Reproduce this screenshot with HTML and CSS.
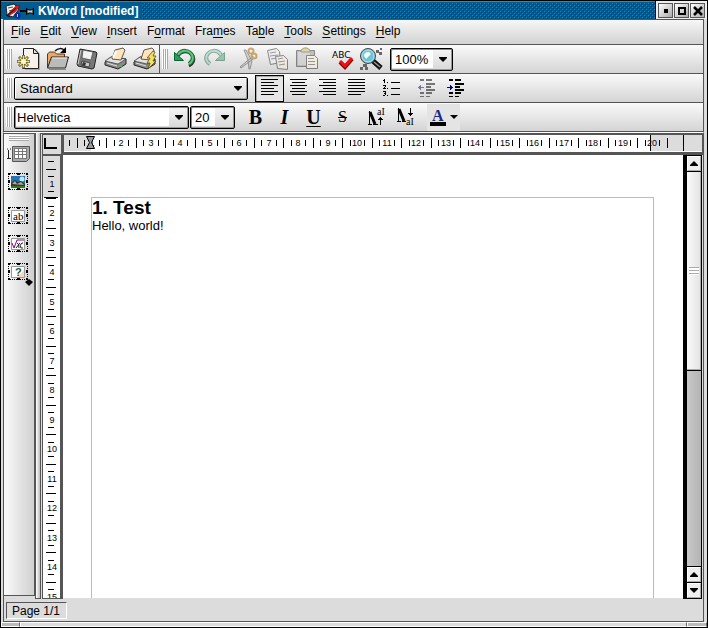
FILE: index.html
```html
<!DOCTYPE html>
<html lang="en">
<head>
<meta charset="utf-8">
<title>KWord [modified]</title>
<link rel="stylesheet" href="styles.css">
</head>
<body>
<div class="window">
  <header class="titlebar">
    <div class="caption">
      <svg class="app-icon" width="16" height="16" viewBox="0 0 16 16"><path d="M1 3l8-2 5 5-6 8-6-2z" fill="#eee" stroke="#222"/><path d="M3 5l5-1M4 8l3-1" stroke="#555"/><path d="M2 12L12 2l3 1-5 6-7 4z" fill="#e01818" stroke="#700" stroke-width=".6"/><path d="M1 12l4 2M2 13l9-8" stroke="#111"/><circle cx="12.500" cy="12.500" r="3" fill="#0828a8"/><path d="M12.500 11v3" stroke="#9cf"/></svg>
      <svg class="pin-icon" width="15" height="12" viewBox="0 0 15 12"><path d="M0 6h6" stroke="#000" stroke-width="2"/><path d="M6.500 3v7M13.500 3v7" stroke="#000"/><path d="M7 4l2 1h2l2-1v5l-2-1H9L7 9z" fill="#ccc" stroke="#000"/></svg>
      <h1>KWord [modified]</h1>
      <div class="stipple"></div>
    </div>
    <div class="window-buttons">
      <button aria-label="Minimize"><svg width="10" height="10"><path d="M3 3h4v4H3z"/></svg></button>
      <button aria-label="Maximize"><svg width="10" height="10"><path d="M2 2h6v6H2z" fill="none" stroke="#000" stroke-width="2"/></svg></button>
      <button aria-label="Close"><svg width="10" height="10"><path d="M1 1l8 8M9 1L1 9" stroke="#000" stroke-width="2.500"/></svg></button>
    </div>
  </header>

  <nav class="menubar">
    <button><u>F</u>ile</button><button><u>E</u>dit</button><button><u>V</u>iew</button><button><u>I</u>nsert</button><button>F<u>o</u>rmat</button><button>Fra<u>m</u>es</button><button>Ta<u>b</u>le</button><button><u>T</u>ools</button><button><u>S</u>ettings</button><button><u>H</u>elp</button>
  </nav>

  <div class="toolbar">
    <span class="grip"></span>
    <button class="tool" aria-label="New"><svg width="24" height="24" viewBox="0 0 24 24"><path d="M8 2h11l4 5v16H8z" fill="#aaa"/><path d="M6.500 1.500h10l5 5v15h-15z" fill="#f8f0ea" stroke="#222"/><path d="M16.500 1.500v5h5z" fill="#ddd" stroke="#222"/><path d="M6.500 8v14M0 14.500h13M2 10l9 9M11 10l-9 9" stroke="#333" stroke-width="2.500"/><path d="M6.500 8.500v12M.5 14.500h12M2.500 10.500l8 8M10.500 10.500l-8 8" stroke="#fce94a" stroke-width="1.500"/><circle cx="6.500" cy="14.500" r="2.500" fill="#fffbb0"/></svg></button>
    <button class="tool" aria-label="Open"><svg width="24" height="24" viewBox="0 0 24 24"><path d="M1.500 20V7l2-2h5l2 2h8v13z" fill="#e8a868" stroke="#5a3a20"/><path d="M1.500 21l4-11h17l-3 11z" fill="#b9bcb9" stroke="#222"/><path d="M6 11h15" stroke="#f2f2f2"/><path d="M3 22.500h17" stroke="#888"/><path d="M9 4c3-3 7-3 9-1" fill="none" stroke="#111" stroke-width="1.500"/><path d="M20 0v6h-6z"/></svg></button>
    <button class="tool" aria-label="Save"><svg width="24" height="24" viewBox="0 0 24 24"><path d="M5 2l16 3 1 1-3 15-2 1-14-3-1-2z" fill="#777" stroke="#222"/><path d="M8 3l10 2-2 8-9-2z" fill="#f2f2f2" stroke="#444" stroke-width=".7"/><path d="M7 14l8 2-1 4-8-2z" fill="#ccc" stroke="#222" stroke-width=".7"/><path d="M8 15l3 1-1 3-3-1z" fill="#333"/><path d="M6 3L3 17" stroke="#ccc"/></svg></button>
    <button class="tool" aria-label="Print"><svg width="24" height="24" viewBox="0 0 24 24"><path d="M1 15l6-5 15 2v5l-8 5-13-4z" fill="#888" stroke="#222"/><path d="M1 14l6-4 15 2-8 5z" fill="#e2e2e2" stroke="#333" stroke-width=".7"/><path d="M8 12l3-9 8-2 2 2-4 10z" fill="#ffe4bc" stroke="#333" stroke-width=".8"/><path d="M12 4l-3 7" stroke="#fff" stroke-width="2"/><path d="M3 16l10 3" stroke="#ddd"/><path d="M15 19h3" stroke="#3c3" stroke-width="2"/></svg></button>
    <button class="tool" aria-label="Print preview"><svg width="24" height="24" viewBox="0 0 24 24"><path d="M1 15l6-5 15 2v5l-8 5-13-4z" fill="#888" stroke="#222"/><path d="M1 14l6-4 15 2-8 5z" fill="#e2e2e2" stroke="#333" stroke-width=".7"/><path d="M8 12l3-9 8-2 2 2-4 10z" fill="#ffe4bc" stroke="#333" stroke-width=".8"/><path d="M3 16l10 3" stroke="#ddd"/><path d="M20 4l-6 7h3l-3 5h3l-2 6 8-8h-3l3-5h-3l2-4z" fill="#f0df69" stroke="#554b10" stroke-width=".8"/></svg></button>
    <span class="divider"></span>
    <span class="grip"></span>
    <button class="tool" aria-label="Undo"><svg width="24" height="24" viewBox="0 0 24 24"><path d="M5 9c4-6 12-5 15 0 2 4 0 8-4 10" fill="none" stroke="#222" stroke-width="3"/><path d="M5 8c4-6 11-5 14 0 2 4 0 7-3 9" fill="none" stroke="#173" stroke-width="4"/><path d="M5 8c4-6 11-5 14 0 2 4 0 7-3 9" fill="none" stroke="#6fbe88" stroke-width="2"/><path d="M1.500 5.500v8h9z" fill="#39965a" stroke="#063"/></svg></button>
    <button class="tool faded" aria-label="Redo"><svg width="24" height="24" viewBox="0 0 24 24"><g transform="matrix(-1 0 0 1 24 0)"><path d="M5 8c4-6 11-5 14 0 2 4 0 7-3 9" fill="none" stroke="#375" stroke-width="4"/><path d="M5 8c4-6 11-5 14 0 2 4 0 7-3 9" fill="none" stroke="#9cb" stroke-width="2"/><path d="M1.500 5.500v8h9z" fill="#5a7" stroke="#264"/></g></svg></button>
    <span class="space"></span>
    <button class="tool faded" aria-label="Cut"><svg width="24" height="24" viewBox="0 0 24 24"><path d="M7 3l4 10 1 9h1l2-8L9 3zM16 9L3 20l1 1 12-9z" fill="#bbb" stroke="#333" stroke-width=".8"/><circle cx="14" cy="4" r="2.500" fill="none" stroke="#a76a10" stroke-width="2"/><circle cx="17" cy="9" r="2.500" fill="none" stroke="#a76a10" stroke-width="2"/></svg></button>
    <button class="tool faded" aria-label="Copy"><svg width="24" height="24" viewBox="0 0 24 24"><path d="M1.500 3.500l9-2 3 3 1 11-10 2z" fill="#eee" stroke="#333"/><path d="M4 6l6-1M4 9l8-1M5 12l6-1" stroke="#555"/><path d="M9.500 9.500l8-1 4 4v10l-10-1z" fill="#f8ecdf" stroke="#333"/><path d="M12 12l5-1M12 15l7-1M13 18l6-1" stroke="#555"/></svg></button>
    <button class="tool faded" aria-label="Paste"><svg width="24" height="24" viewBox="0 0 24 24"><path d="M1.500 3.500h18v16h-18z" fill="#999" stroke="#333"/><path d="M3 5h12v13H3z" fill="#c5c5c5"/><path d="M6 5V3l3-2h3l3 2v2z" fill="#d6bd55" stroke="#554"/><path d="M11.500 8.500h8l3 3v10h-11z" fill="#fff1de" stroke="#333"/><path d="M13 11.500h6M13 14.500h7M13 17.500h7" stroke="#555"/></svg></button>
    <span class="space"></span>
    <button class="tool" aria-label="Spelling"><svg width="24" height="24" viewBox="0 0 24 24"><text x="2" y="11" class="abc">ABC</text><path d="M10 15l5 5 7-8" fill="none" stroke="#800" stroke-width="4"/><path d="M10 14l5 5 7-8" fill="none" stroke="#e11" stroke-width="3"/></svg></button>
    <button class="tool" aria-label="Find"><svg width="24" height="24" viewBox="0 0 24 24"><path d="M17 3h3v3h-3zM21 1h2v2h-2zM20 5h3v3h-3zM1 20h3v3H1zM4 17h4v3H4zM6 20h3v3H6z" fill="#666"/><path d="M14 14l8 7" stroke="#111" stroke-width="5"/><path d="M15 15l6 5" stroke="#999" stroke-width="1.500"/><circle cx="9" cy="9" r="7.500" fill="#72c0d4" stroke="#444"/><circle cx="9" cy="9" r="6" fill="none" stroke="#b8e4e8"/><path d="M5 9c0-3 2-4 5-4l2 2-5 5z" fill="#e9ffff"/></svg></button>
    <select class="combo combo-zoom" aria-label="Zoom"><option>100%</option></select>
  </div>

  <div class="toolbar">
    <span class="grip"></span>
    <select class="combo combo-style" aria-label="Style"><option>Standard</option></select>
    <button class="tool line pressed" aria-label="Align left"><svg width="18" height="18" viewBox="0 0 18 18"><path d="M0 .5h17M0 3.500h13M0 6.500h17M0 9.500h13M0 12.500h17M0 15.500h13" /></svg></button>
    <button class="tool line" aria-label="Align center"><svg width="18" height="18" viewBox="0 0 18 18"><path d="M0 .5h17M2 3.500h13M0 6.500h17M2 9.500h13M0 12.500h17M2 15.500h13"/></svg></button>
    <button class="tool line" aria-label="Align right"><svg width="18" height="18" viewBox="0 0 18 18"><path d="M0 .5h17M4 3.500h13M0 6.500h17M4 9.500h13M0 12.500h17M4 15.500h13"/></svg></button>
    <button class="tool line" aria-label="Justify"><svg width="18" height="18" viewBox="0 0 18 18"><path d="M0 .5h17M0 3.500h17M0 6.500h17M0 9.500h17M0 12.500h17M0 15.500h13"/></svg></button>
    <span class="space"></span>
    <button class="tool line" aria-label="Numbered list"><svg width="18" height="18" viewBox="0 0 18 18"><path d="M8 3.500h9M8 9.500h9M8 15.500h9"/><path d="M0 1.500h2M1.500 0v4M4 3.500h1M0 6.500h2M2.500 6v2M1.500 8v1M0 9.500h3M4 9.500h1M0 12.500h2M1 14.500h1M2.500 12v4M0 16.500h2M4 16.500h1"/></svg></button>
    <span class="space"></span>
    <button class="tool line dim" aria-label="Decrease indent"><svg width="18" height="18" viewBox="0 0 18 18"><path d="M2 1h4M8 1h6M8 5h9M8 8h5M8 11h9M2 14h4M8 14h6" stroke-width="2"/><path d="M2 17.500h4M8 17.500h4"/><path class="arrow" d="M0 8.500h6M1.500 7v3M2.500 6v5"/></svg></button>
    <button class="tool line" aria-label="Increase indent"><svg width="18" height="18" viewBox="0 0 18 18"><path d="M2 1h4M8 1h6M8 5h9M8 8h5M8 11h9M2 14h4M8 14h6" stroke-width="2"/><path d="M2 17.500h4M8 17.500h4"/><path class="arrow" d="M0 8.500h6M4.500 7v3M3.500 6v5"/></svg></button>
  </div>

  <div class="toolbar">
    <span class="grip"></span>
    <select class="combo combo-font" aria-label="Font"><option>Helvetica</option></select>
    <select class="combo combo-size" aria-label="Font size"><option>20</option></select>
    <span class="space"></span>
    <button class="tool letter"><b>B</b></button>
    <button class="tool letter"><i>I</i></button>
    <button class="tool letter"><u>U</u></button>
    <button class="tool letter strike"><s>S</s></button>
    <span class="space"></span>
    <button class="tool line" aria-label="Superscript"><svg width="22" height="22" viewBox="0 0 22 22"><path d="M3 6l5 12" stroke-width="3"/><path d="M2.500 5v13M1 18.500h4M6 18.500h5"/><path d="M13.500 19v-8M11 13.500h5M12 12.500h3"/><text x="10" y="9" class="script">aI</text></svg></button>
    <button class="tool line" aria-label="Subscript"><svg width="22" height="22" viewBox="0 0 22 22"><path d="M3 3l5 12" stroke-width="3"/><path d="M2.500 2v13M1 15.500h4M6 15.500h4"/><path d="M14.500 2v8M12 7.500h5M13 8.500h3"/><text x="10" y="19" class="script">aI</text></svg></button>
    <span class="space"></span>
    <button class="tool line text-color" aria-label="Text color"><svg width="28" height="20" viewBox="0 0 28 20"><text x="2" y="14" class="color-a">A</text><path d="M0 17h16" stroke-width="4"/><path class="fill" d="M20 8h8l-4 4z"/></svg></button>
  </div>

  <main class="workspace">
    <aside class="sidebar">
      <span class="grip grip-h"></span>
      <button class="side-tool" aria-label="Insert table"><svg width="28" height="20" viewBox="0 0 28 20"><path d="M3 5h1M6 5h1M4.500 6v8M3 14.500h4" stroke="#222"/><path d="M8.500 2.500h17v12l-3 3h-14z" fill="#aaa" stroke="#555"/><path d="M10 4h13v11H10z" fill="#fff"/><path d="M10 4.500h13M10 7.500h13M10 10.500h13M10 14.500h13M10.500 4v11M14.500 4v11M18.500 4v11M22.500 4v11" stroke="#777"/></svg></button>
      <button class="side-tool" aria-label="Insert picture"><svg width="28" height="20" viewBox="0 0 28 20"><path class="frame" d="M4 1.500h20M4 17.500h20M4.500 2v16M23.500 2v16"/><path class="marks" d="M4 1h2v2H4zM13 1h3v2h-3zM22 1h2v2h-2zM4 8h2v3H4zM22 8h2v3h-2zM4 16h2v2H4zM13 16h3v2h-3zM22 16h2v2h-2z"/><path d="M7 4h14v12H7z" fill="#2572b5"/><circle cx="18" cy="7" r="2.500" fill="#bde9ff"/><path d="M7 11l4-3 3 2 3-1 4 3v2H7z" fill="#333"/><path d="M8 12l3-3 2 3 4-2 3 3z" fill="#aaa"/><path d="M7 14h14v2H7z" fill="#327a18"/></svg></button>
      <button class="side-tool gap-above" aria-label="Text frame"><svg width="28" height="20" viewBox="0 0 28 20"><path class="frame" d="M4 1.500h20M4 17.500h20M4.500 2v16M23.500 2v16"/><path class="marks" d="M4 1h2v2H4zM13 1h3v2h-3zM22 1h2v2h-2zM4 8h2v3H4zM22 8h2v3h-2zM4 16h2v2H4zM13 16h3v2h-3zM22 16h2v2h-2z"/><path class="pane" d="M7.500 4.500h13v11h-13z"/><text x="9" y="14" class="ab">ab</text></svg></button>
      <button class="side-tool" aria-label="Formula"><svg width="28" height="20" viewBox="0 0 28 20"><path class="frame" d="M4 1.500h20M4 17.500h20M4.500 2v16M23.500 2v16"/><path class="marks" d="M4 1h2v2H4zM13 1h3v2h-3zM22 1h2v2h-2zM4 8h2v3H4zM22 8h2v3h-2zM4 16h2v2H4zM13 16h3v2h-3zM22 16h2v2h-2z"/><path class="pane" d="M7.500 4.500h13v11h-13z"/><path d="M8 9l2 5 3-8h7" fill="none" stroke="#808"/><path d="M13 9q2 0 2 5m1-5l-4 5M19 9h-1q-3 2-1 5h2" fill="none" stroke="#222"/></svg></button>
      <button class="side-tool" aria-label="Insert object"><svg width="28" height="20" viewBox="0 0 28 20"><path class="frame" d="M4 1.500h20M4 17.500h20M4.500 2v16M23.500 2v16"/><path class="marks" d="M4 1h2v2H4zM13 1h3v2h-3zM22 1h2v2h-2zM4 8h2v3H4zM22 8h2v3h-2zM4 16h2v2H4zM13 16h3v2h-3zM22 16h2v2h-2z"/><path class="pane" d="M7.500 4.500h13v11h-13z"/><path d="M14 15l6-7v7z" fill="#f8d8c0"/><text x="11" y="14" class="query">?</text></svg></button>
      <svg class="more" width="8" height="7"><path d="M4 0l4 3-4 4-4-4z"/></svg>
    </aside>
    <div class="splitter"></div>
    <div class="editor">
      <div class="corner"><svg width="16" height="16"><path d="M2 3v10H14" fill="none" stroke="#000" stroke-width="2"/></svg></div>
      <div class="ruler-x"><svg id="ruler-x" width="100%" height="16"></svg></div>
      <div class="ruler-y"><svg id="ruler-y" width="17" height="100%"></svg></div>
      <div class="canvas">
        <article class="page">
          <h2>1. Test</h2>
          <p>Hello, world!</p>
        </article>
      </div>
      <div class="scrollbar">
        <button aria-label="Scroll up"><svg width="8" height="5"><path d="M4 0l4 4v1H0V4z"/></svg></button>
        <div class="thumb"><span></span></div>
        <div class="trough"></div>
        <button aria-label="Page up"><svg width="8" height="5"><path d="M4 0l4 4v1H0V4z"/></svg></button>
        <button aria-label="Scroll down"><svg width="8" height="5"><path d="M0 0h8v1L4 5 0 1z"/></svg></button>
      </div>
    </div>
  </main>

  <footer class="statusbar"><span>Page 1/1</span></footer>
  <div class="resize-edge"><i></i><i></i><i></i></div>
</div>
<script src="ruler.js"></script>
</body>
</html>
```
FILE: styles.css
```css
* { box-sizing: border-box; }
html, body { height: 100%; margin: 0; }
body { background: #000; color: #000; font: 13px "Liberation Sans", Arial, sans-serif; overflow: hidden; }
button, select { font: inherit; color: inherit; border: 0; padding: 0; margin: 0; background: none; border-radius: 0; }
h1, h2, p { margin: 0; }
svg { display: block; flex: none; }

.window { display: flex; flex-direction: column; height: 100vh; background: #dcdcdc; border: 1px solid #000; }
.menubar, .toolbar, .workspace, .statusbar { margin: 0 3px 0 2px; border-left: 1px solid #555; border-right: 1px solid #555; }

.titlebar { display: flex; height: 18px; flex: none; }
.caption { flex: 1; display: flex; align-items: center; background: #005b91; border-top: 1px solid #2b8cc4; padding-left: 4px; color: #fff; }
.pin-icon { margin: 0 3px 0 -1px; }
h1 { font-size: 12px; line-height: 16px; font-weight: bold; }
.stipple {
  flex: 1; height: 16px; margin-left: 4px;
  background: url("data:image/svg+xml,%3Csvg xmlns='http://www.w3.org/2000/svg' width='4' height='4'%3E%3Cpath d='M0 2h1v1H0zM2 0h1v1H2z' fill='%231c86bd'/%3E%3Cpath d='M1 3h1v1H1zM3 1h1v1H3z' fill='%23003a60'/%3E%3C/svg%3E");
}
.window-buttons { display: flex; gap: 1px; padding: 2px 2px 1px; background: #eee; border-left: 1px solid #000; }
.window-buttons button { width: 15px; height: 15px; display: grid; place-items: center; border: 1px solid #555; background: linear-gradient(135deg, #fff, #aaa); }

.menubar { display: flex; gap: 10px; height: 26px; flex: none; padding: 0 7px 2px; background: linear-gradient(#f6f6f6, #d2d2d2); border-top: 1px solid #555; border-bottom: 1px solid #555; }
.menubar button { font-size: 12px; line-height: 22px; }
.menubar u, .letter u { text-underline-offset: 2px; text-decoration-thickness: 1px; }

.toolbar { display: flex; align-items: center; height: 29px; flex: none; background: linear-gradient(#fafafa, #d4d4d4); border-bottom: 1px solid #555; }
.grip { width: 6px; height: 20px; margin: 0 2px; background: repeating-linear-gradient(90deg, #fff 0 1px, #aaa 1px 2px); }
.divider { width: 1px; align-self: stretch; background: #555; }
.space { width: 6px; }
.tool { width: 29px; height: 27px; display: grid; place-items: center; }
.line svg { stroke: #000; fill: none; }
.tool text { stroke: none; fill: #000; }
.faded { opacity: .55; }
.pressed { border: 1px solid #000; background: #e6e6e6; box-shadow: inset 1px 1px #aaa; }
.dim { opacity: .5; }
.arrow { stroke: #009; }
.line .fill { fill: #000; stroke: none; }
.letter { font: bold 20px "Liberation Serif", "Times New Roman", serif; line-height: 26px; }
.strike { font-size: 16px; font-weight: normal; }
.abc { font: 9px "DejaVu Sans", sans-serif; }
.script { font: 10px "Liberation Serif", serif; }
.color-a { font: bold 16px "Liberation Serif", serif; }
.tool .color-a { fill: #1c2a80; }
.text-color { width: 33px; background: #e4e4e4; }

.combo {
  appearance: none; height: 23px; padding: 0 20px 0 5px; line-height: 19px;
  border: 1px solid #000; border-radius: 2px; box-shadow: inset 1px 1px #fff, inset -1px -1px #999;
  background: url("data:image/svg+xml,%3Csvg xmlns='http://www.w3.org/2000/svg' width='8' height='5'%3E%3Cpath d='M0 0h8v1L4 5 0 1z'/%3E%3C/svg%3E") no-repeat right 5px center, linear-gradient(#f4f4f4, #d8d8d8);
}
.combo-style { width: 234px; margin-right: 7px; }
.combo-zoom, .combo-font, .combo-size {
  padding-left: 2px;
  background: url("data:image/svg+xml,%3Csvg xmlns='http://www.w3.org/2000/svg' width='8' height='5'%3E%3Cpath d='M0 0h8v1L4 5 0 1z'/%3E%3C/svg%3E") no-repeat right 5px center, linear-gradient(90deg, #fff, #fff) no-repeat 1px 1px / calc(100% - 20px) 18px, linear-gradient(#f4f4f4, #d8d8d8);
  box-shadow: inset 1px 1px #888, inset -1px -1px #999;
}
.combo-zoom { width: 63px; margin-left: 5px; padding-left: 4px; }
.combo-font { width: 175px; }
.combo-size { width: 45px; margin-left: 1px; padding-left: 4px; }

.workspace { flex: 1; min-height: 0; display: flex; border-top: 1px solid #fff; }
.sidebar { width: 31px; margin-bottom: 3px; flex: none; display: flex; flex-direction: column; align-items: flex-start; gap: 8px; border: 1px solid #555; border-left: 0; background: linear-gradient(90deg, #fafafa, #d0d0d0); position: relative; }
.grip-h { width: 20px; height: 6px; margin: 1px 0 -5px 5px; background: repeating-linear-gradient(#fff 0 1px, #aaa 1px 2px); }
.side-tool { height: 20px; }
.gap-above { margin-top: 6px; }
.frame { fill: none; stroke: #000; stroke-dasharray: 1 1; }
.marks { fill: #000; }
.pane { fill: #fff; stroke: #999; }
.ab { font: 11px "Liberation Serif", serif; }
.query { font: bold 11px "Liberation Sans", sans-serif; fill: #175c42; }
.more { position: absolute; left: 21px; top: 145px; }
.splitter { width: 6px; flex: none; border: 1px solid #555; border-top: 0; background: linear-gradient(90deg, #fff, #bbb); }

.editor { flex: 1; min-width: 0; display: grid; grid-template-columns: 22px minmax(0, 1fr) 20px; grid-template-rows: 21px minmax(0, 1fr); border-top: 1px solid #555; }
.corner, .ruler-x, .ruler-y { border: 1px solid #555; }
.corner { margin-left: 1px; background: #dcdcdc; border-right-width: 2px; }
.ruler-x { grid-column: 2 / 4; border-bottom: 3px solid #555; background: #fff; overflow: hidden; }
.ruler-y { margin-left: 1px; border-right: 3px solid #555; background: #fff; overflow: hidden; }
.canvas { overflow: hidden; background: #fff; border-bottom: 1px solid #ddd; }
.page { height: 100%; margin: 42px 29px 0 28px; border: 1px solid #bbb; border-bottom: 0; }
.page h2 { font-size: 19px; line-height: 20px; }
.page p { line-height: 15px; }
.scrollbar { display: flex; flex-direction: column; gap: 1px; margin-right: 1px; padding: 1px 1px 1px 4px; background: #000; }
.scrollbar button { height: 15px; flex: none; display: grid; place-items: center; background: #eee; border: 1px solid #fff; border-right-color: #aaa; border-bottom-color: #aaa; }
.thumb { flex: 199; display: grid; place-items: center; background: linear-gradient(90deg, #fafafa, #e4e4e4); border-right: 1px solid #aaa; border-bottom: 1px solid #aaa; }
.thumb span { width: 10px; height: 8px; background: repeating-linear-gradient(#aaa 0 1px, #fff 1px 3px); }
.trough { flex: 196; background: linear-gradient(90deg, #c8c8c8, #b4b4b4); }

.ruler-label { font: 9px "Liberation Sans", Arial, sans-serif; text-anchor: middle; }
.ruler-margin { fill: #dcdcdc; }
.ruler-line { stroke: #000; shape-rendering: crispEdges; }
.tab-marker { fill: #999; stroke: #000; }

.statusbar { height: 23px; flex: none; padding: 3px 0 3px 2px; border-bottom: 1px solid #555; }
.statusbar span { display: inline-block; height: 17px; padding: 0 6px 0 5px; line-height: 17px; font-size: 12px; border: 1px solid #555; border-right-color: #fff; border-bottom-color: #fff; }
.resize-edge { display: grid; grid-template-columns: 19px 1fr 20px; height: 5px; flex: none; }
.resize-edge i { border: 1px solid #fff; border-right-color: #666; background: #bbb; }
.resize-edge i:nth-child(2) { background: #dcdcdc; }
```
FILE: ruler.js
```js
const NS = "http://www.w3.org/2000/svg";
const CM = 29.5;
const MIDDLE = 8;

function add(parent, tag, attrs, text) {
  const el = document.createElementNS(NS, tag);
  for (const name in attrs) el.setAttribute(name, attrs[name]);
  if (text !== undefined) el.textContent = text;
  parent.appendChild(el);
}

function drawRuler(svg, vertical, origin, count, margins) {
  for (const [from, length] of margins) {
    add(svg, "rect", vertical
      ? { class: "ruler-margin", x: 0, y: from, width: 17, height: length }
      : { class: "ruler-margin", x: from, y: 0, width: length, height: 17 });
  }
  const tick = (at, half) => {
    const p = Math.round(at) + 0.5;
    add(svg, "path", { class: "ruler-line", d: vertical
      ? `M${MIDDLE - half} ${p}H${MIDDLE + half}`
      : `M${p} ${MIDDLE - half}V${MIDDLE + half}` });
  };
  for (let n = 0; n <= count; n++) {
    const at = origin + n * CM;
    if (n > 0) {
      add(svg, "text", vertical
        ? { class: "ruler-label", x: MIDDLE + 1, y: Math.round(at) + 3 }
        : { class: "ruler-label", x: Math.round(at), y: MIDDLE + 3 }, n);
      tick(at - CM / 4, 3);
    }
    tick(at + CM / 4, 3);
    tick(at + CM / 2, 5);
  }
}

const rulerX = document.getElementById("ruler-x");
drawRuler(rulerX, false, -2, 20, [[0, 27], [586, 60]]);
add(rulerX, "path", { class: "tab-marker", d: "M22.5 1.5h8l-3 6 3 6h-8l3-6z" });
add(rulerX, "path", { class: "ruler-line", d: "M586.5 0V17M619.5 0V17" });

const rulerY = document.getElementById("ruler-y");
drawRuler(rulerY, true, -2, 15, [[0, 41]]);
add(rulerY, "path", { class: "ruler-line", d: "M1 41.5H15" });
```
